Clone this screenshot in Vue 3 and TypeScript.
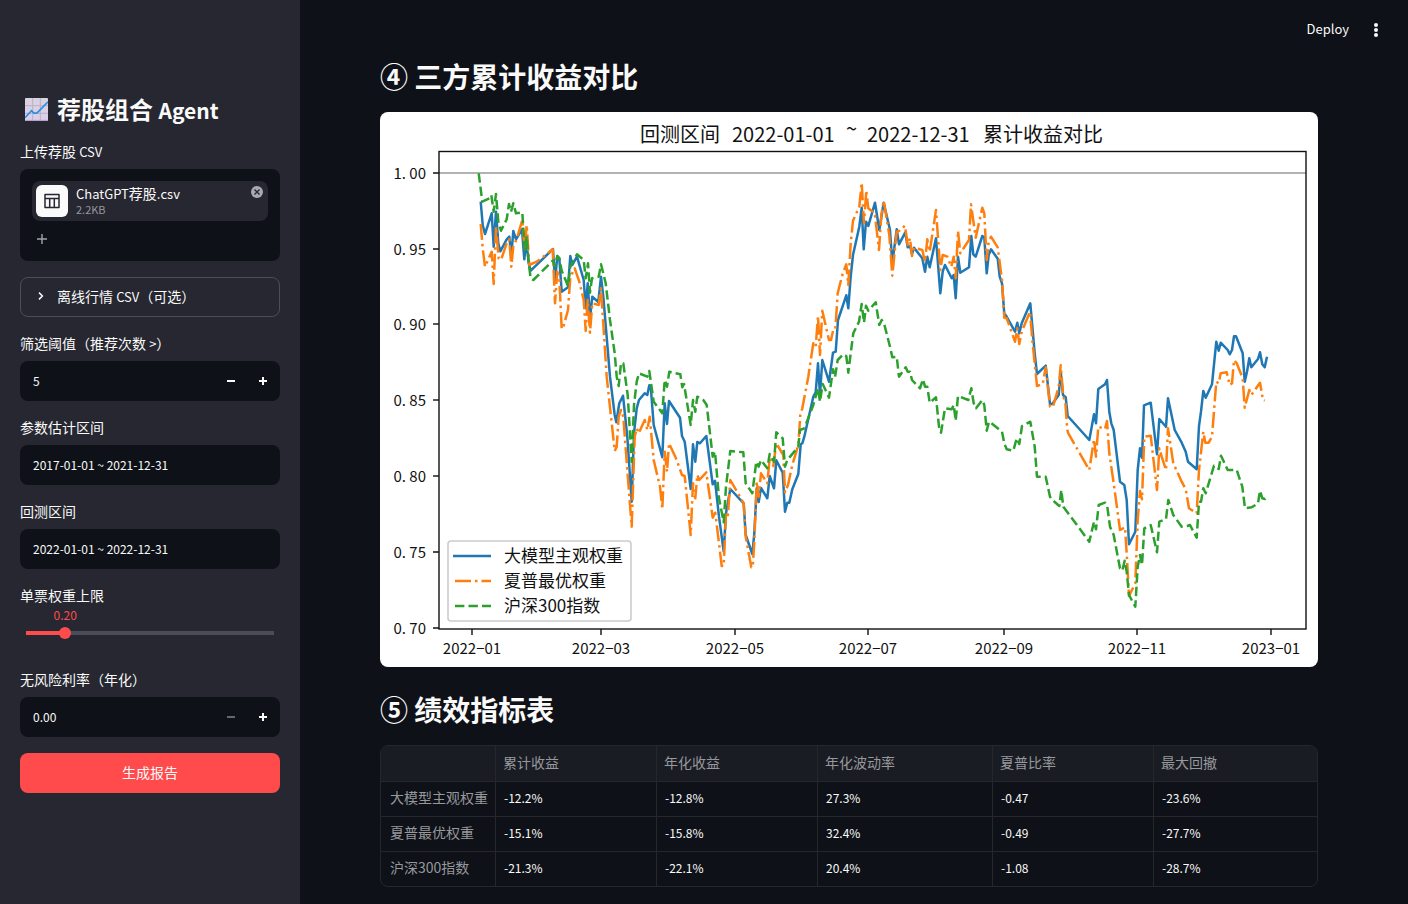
<script setup lang="ts">
import { computed, ref } from 'vue'

const threshold = ref('5')
const estimateRange = ref('2017-01-01 ~ 2021-12-31')
const backtestRange = ref('2022-01-01 ~ 2022-12-31')
const maxWeight = ref(0.2)
const riskFree = ref('0.00')

const minW = 0.05
const maxW = 1
const fill = computed(() => ((maxWeight.value - minW) / (maxW - minW)) * 100)
const sliderStyle = computed(() => ({ '--fill': fill.value + '%' }))
const valueStyle = computed(() => ({ left: fill.value + '%' }))

function bumpThreshold(step: number) {
  threshold.value = String(Math.max(0, Number(threshold.value) + step))
}
function bumpRate(step: number) {
  riskFree.value = Math.max(0, Number(riskFree.value) + step).toFixed(2)
}

const yTicks = [
  { y: 173, label: '1. 00' },
  { y: 249, label: '0. 95' },
  { y: 324, label: '0. 90' },
  { y: 400, label: '0. 85' },
  { y: 476, label: '0. 80' },
  { y: 552, label: '0. 75' },
  { y: 628, label: '0. 70' },
]
const xTicks = [
  { x: 472, label: '2022−01' },
  { x: 601, label: '2022−03' },
  { x: 735, label: '2022−05' },
  { x: 868, label: '2022−07' },
  { x: 1004, label: '2022−09' },
  { x: 1137, label: '2022−11' },
  { x: 1271, label: '2023−01' },
]

const llmLine =
  '480.7,201.7 482.7,225 485,234 491.7,213.3 493.7,246.7 496,211.7 498.3,243.3 500.3,251.3 506.7,239.3 509.3,236.7 511.3,256 513.3,231 516,239.3 522,229.3 524.3,259.3 526.3,240 528.7,263.3 530.7,270.7 553,249 555,281.7 557.3,256 559.3,258.3 561.7,291.7 568,287.3 570.3,256 572.3,265 577,256.7 583.7,280 585.7,308.3 587.7,283.3 590,318.3 592.3,296.7 598.3,302 601,276.7 603.3,296.7 610,376.7 614.7,415 616.3,422.3 619.3,403.3 623,395.7 627.3,436.7 631.7,501.7 634,433.3 636.7,408.3 639,400 644.7,393.3 647.3,395 649.3,385.3 651,390 653.7,425 662.3,457.3 664.7,403.3 667,424 669,401 680,417.7 682,436 684.7,441.7 690.7,489 693,444.3 695.3,461.7 697.3,442 700,443.3 706.3,436 712.7,484.3 715,480.7 719,516.7 723.7,551.7 726,513.3 730.3,489 743.7,503.3 745.7,535 752.3,554 754.3,533.3 756.7,488.3 758.7,502 761,488 767.3,498.3 769.7,476 774,488.3 776.3,460.3 782.7,472.7 785,511.7 787.3,502.7 789.3,502.7 792.3,489.3 798.3,474 800.7,444.3 802.3,443.3 804.3,436.7 813.3,396.7 815.7,392.3 818,363.3 820,395 822.3,360 829,381.7 833,352.7 835.7,351.7 838,320 846.3,295.3 848.3,308.3 850.7,276.7 853,255 859.3,226.7 861.7,207.7 863.7,249.3 866,221.7 868.3,226 875,202.7 879.3,230 883.7,202.7 890,230 892.3,263.3 896.7,229.3 899,244.3 905.3,232.3 907.7,247.3 910,246 912,254 914,247.7 922.3,258.3 925,271.7 927.3,256.7 929.7,267.3 936,238.3 940.3,293.3 942.7,271.7 945,265 951.7,278.3 953.7,275 955.7,298.3 958,256.7 960.3,272.7 969,267.3 971.3,236 973.3,254.3 975.7,256.7 982.3,236 984.3,237.3 986.7,273.3 988.7,255 991,249.3 997.7,258.7 999.7,276.7 1002,283.3 1004.3,314 1006.3,316 1015,331.7 1017.3,322.7 1019.3,333.3 1021.7,323.3 1030.3,303.3 1034.7,353.3 1037,374 1045.7,365.7 1050,404 1052.3,404 1058.7,395 1060.7,371.7 1063,395 1065.7,397.3 1067.7,416 1089.3,440 1094,414.3 1096,423.3 1098.3,389 1105,384.3 1107,380 1109.3,411.7 1111.3,423.3 1113.7,430 1120,481.7 1124.3,485 1126.7,500 1129,544.3 1135.3,531.7 1137.7,470 1140,448.3 1142,457.7 1144,405.3 1150.7,402.7 1157,454.3 1159.3,419 1166,426.7 1168,398.3 1174.7,430 1181.7,442.7 1185.7,451.7 1188,461.7 1196.7,469.3 1199,426 1201,411.7 1203.3,391 1205.7,397.7 1212,384.3 1216.3,341.7 1218.7,350.7 1220.7,342.7 1227.7,350 1229.7,354.3 1232,350 1234,336.3 1236,336.3 1242.7,353.3 1244.7,381.7 1247,371.7 1249.3,358.3 1251.3,367.3 1258,359 1260,352.3 1262.3,364.3 1264.7,367.3 1267,356.7'

const sharpeLine =
  '480.7,224 482.7,248.3 485,266.7 491.7,251.7 493.7,284 496,226.7 498.7,258.3 501,260 506.7,243.3 509.3,239.3 511.3,266.7 513.3,246.7 517.3,237.3 522.3,220 524.7,249 526.7,225 529.3,265 536.7,261.7 552.7,249.3 555,303.3 557.3,271.7 559.3,278.3 561.7,329 563.7,325.7 568,310 570.3,277.3 574.7,268.3 579.3,281.7 583.7,300 585.7,331 587.7,300 590,332.7 592.3,303.3 598.7,305 601,288.3 606.7,376.7 614.7,451 616.7,446.7 618.7,416.7 621,410 623.3,416.7 627.3,470 631.7,526.7 634.7,436.7 636.7,428.3 638.7,433.3 644.7,420 647.3,430 649.7,416.7 653.7,460 660,486.7 662.3,509.3 664.7,451.7 667,471.7 669,443.3 676,458.3 682,475 684.7,476 690.7,535 693,483.3 695.3,498.3 697.3,475 699.3,480 706.3,472.3 712.7,517.7 715.3,512.7 721.7,566 723.7,566 726,511.7 728,515 730.3,480 743.7,503.3 745.7,536.7 751.3,567.3 752.7,567.3 754.3,541.7 756.7,481.7 758.7,496.7 761,473.3 767.3,483.3 769.7,458.3 773.3,466 776.3,443.3 783.3,455 785,492.3 788,485 792.3,465 798.3,445 800.3,415 802.3,408.3 808.3,376.7 813.3,343.3 815.7,346.7 818,316 820,355 822.3,310.7 829,340 831,340 833,331 835.3,330 837.7,293.3 842.3,275 846.3,264.3 848.3,285 850.7,243.3 853,220.7 859.3,206.7 861.7,182.7 864,223.3 866.3,190.7 868.3,208.3 874.7,213.3 879,250 881.3,215 883.7,200.7 889.3,235 892.3,275.7 896.7,231.7 899,231 905,225.7 907.7,245 910,238.3 912,256 914.3,247.7 922.3,250 925,261.7 927.3,239.3 929.7,251.7 936,210 940.3,270 942.7,255 947.3,256.7 951.3,266.7 953.7,256.7 955.7,278.3 958,231 960.3,253.3 969,240 971,204.3 975.7,237.7 982.3,207.7 984.3,213.3 986.7,260 988.7,241.7 991,236.7 997.7,247.3 1002,280 1004.3,317.7 1006.7,318.3 1015,341.7 1017.3,328.3 1019.3,344 1021.7,331.7 1030,311.7 1032.3,340 1037,386 1042.7,384 1045.7,367.3 1050,406.7 1053,406.7 1058.7,386.7 1060.7,365.3 1063.3,396.7 1065.3,401.7 1067.3,430 1068.3,433.3 1089.3,470 1094,439.3 1096,456.7 1098.3,426.7 1105,429 1107,421 1109.3,453.3 1113.7,483.3 1120,530 1125,527.3 1126.7,553.3 1129,596 1135.3,583.3 1137.7,520 1140,491 1142,499.3 1144.3,436.7 1150.7,435.7 1157,490 1159.3,448.3 1161.7,456.7 1166,470 1168,428.3 1173.3,463.3 1181.7,481.7 1185.7,489.3 1189,508.3 1196.7,513.3 1199,470 1203.3,431.7 1205.3,442.7 1208.7,442.7 1212,436.7 1216.3,381.7 1218.7,383.3 1220.7,373.3 1226.7,372.3 1229.7,385 1232,383.3 1234,360 1236.7,363.3 1242.7,378.3 1244.7,407.7 1249.3,390 1251.3,395 1260,382.7 1263,400 1264.7,400.7'

const indexLine =
  '478.7,173.3 482.3,201.7 489.3,198.3 491.3,195 493.7,211.7 496,194 498.3,221.7 501,230.7 506.7,219.3 509,204 511,211.7 513.3,203.3 516,213.3 522.3,212.3 524.7,250 526.7,236 528.7,263.3 530.7,278.3 533.3,280 552.7,260.7 555,266 557.3,256 559.3,258.3 561.7,270.7 568,286 570.3,266.7 577,254.3 583.7,260 585.7,278.3 588,263.3 590,292.7 592,278.3 598.7,276.7 601,264.3 605.7,283.3 610,320 614.7,353.3 616.7,376.7 618.7,386 621,363.3 623.3,363.3 627.7,395 631.7,461.7 634,405 636.7,381.7 639,373.3 647.3,376.7 649.3,371 653.7,401.7 662.3,413.3 664.7,380 667,386.7 669.3,371.7 680.3,374.3 682.3,387.3 684,384 690.7,425 693,400 695.3,411.7 697.3,396.7 703.3,400 706.7,405 712.7,456.7 715,451.7 719,498.3 723.7,522.3 726,486.7 730.3,451 743.3,452.3 745.7,483.3 752.3,493.3 756.3,461.7 758.7,466.7 761,460 767.3,468.3 769.7,454 774,461.7 776.3,432.3 782.7,438.3 785,466.7 787.3,460 798.3,446.7 800,430 804.3,428.3 813.3,405 818,388.3 820,401.7 822.7,384 829,397.7 833,369.3 835,377.3 837.7,360 843.3,354.3 846.3,356 848.3,372.7 850.7,353.3 853.3,333.3 859,321.7 861.7,304 864,322.7 866,305.7 868.3,310.7 875.7,302.3 879.3,325 881.7,320 884,323.3 890,346.7 892.3,357.3 896.7,356.7 899,376.7 905.7,367.3 907.7,371.7 910,371.7 912,380 920,388.3 923,379.3 925,386.7 927.3,386.7 929.7,402.7 936,397.3 939,426.7 941,432.7 945,408.3 951.7,409.3 953.7,405 955.7,420.7 958,396 968.3,400 971.3,388.3 973.7,403.3 976,408.3 982.3,400 984.3,405 986.7,430.7 989,421.7 990.7,422.7 997.7,428.3 1002,431.7 1004.3,443.3 1006.7,449.3 1013.3,450.7 1016.7,438.3 1019.3,444 1022,426 1030.3,421.7 1034.7,446.7 1037,476.7 1045.7,476.7 1050,496.7 1052.3,500 1059.3,506 1061.3,490 1063.3,506.7 1089.3,541.7 1094,521.7 1096,529.3 1098.7,505 1105,502.7 1107.3,506.7 1110,526.7 1113.7,535 1120,568.3 1122.3,570.7 1124.7,560.7 1126.7,571.7 1129,595 1135.3,606.7 1137.7,566.7 1140,555 1142,565 1144.3,528.3 1150.7,525 1157,552.3 1159.3,521.7 1166,519 1168.3,500 1173.3,515 1181.7,526.7 1187.3,526 1190,525 1196.7,537.7 1199,501.7 1201,501.7 1203.3,488.3 1205.7,493.3 1214,465.7 1218.7,469 1221,455.7 1227.7,470 1236.7,470 1242.3,486.7 1245,508.3 1251.7,507.3 1258,503.3 1260,490.7 1262.3,498.3 1265,499 1267,495'

const columns = ['累计收益', '年化收益', '年化波动率', '夏普比率', '最大回撤']
const rows = [
  { name: '大模型主观权重', values: ['-12.2%', '-12.8%', '27.3%', '-0.47', '-23.6%'] },
  { name: '夏普最优权重', values: ['-15.1%', '-15.8%', '32.4%', '-0.49', '-27.7%'] },
  { name: '沪深300指数', values: ['-21.3%', '-22.1%', '20.4%', '-1.08', '-28.7%'] },
]
</script>

<template>
  <div class="app">
    <aside class="sidebar">
      <h1 class="brand">
        <svg class="brand-icon" viewBox="0 0 24 24" aria-hidden="true">
          <defs>
            <linearGradient id="paper" x1="0" y1="0" x2="0" y2="1">
              <stop offset="0" stop-color="#d9d2df" />
              <stop offset="1" stop-color="#dccfea" />
            </linearGradient>
          </defs>
          <rect width="24" height="24" rx="1" fill="url(#paper)" />
          <path d="M8 0V24M16 0V24M0 8H24M0 16H24" stroke="#b9afc2" stroke-width="1" />
          <path d="M0 23.4H24" stroke="#b79fd0" stroke-width="1.2" />
          <path d="M0 20.5L6.8 13.2L9.2 15.8H12.4L24 4" fill="none" stroke="#2b8fe0" stroke-width="1.7" />
        </svg>
        <span>荐股组合 <span class="brand-latin">Agent</span></span>
      </h1>

      <div class="field">
        <label class="label" for="upload">上传荐股 <span class="latin">CSV</span></label>
        <div class="uploader">
          <div class="file">
            <span class="file-icon">
              <svg viewBox="0 0 18 18" aria-hidden="true">
                <path
                  d="M2 2.5H16V15.5H2ZM2 6.5H16M6.7 6.5V15.5M11.3 6.5V15.5"
                  fill="none"
                  stroke="#262730"
                  stroke-width="1.5"
                  stroke-linejoin="round"
                />
              </svg>
            </span>
            <span class="file-text">
              <span class="file-name"><span class="latin">ChatGPT</span>荐股<span class="latin">.csv</span></span>
              <span class="file-size">2.2KB</span>
            </span>
            <button class="remove" type="button" aria-label="移除文件">
              <svg viewBox="0 0 12 12" aria-hidden="true">
                <circle cx="6" cy="6" r="6" fill="#a9aaae" />
                <path d="M3.5 3.5L8.5 8.5M8.5 3.5L3.5 8.5" stroke="#262730" stroke-width="1.4" />
              </svg>
            </button>
          </div>
          <button id="upload" class="add" type="button" aria-label="添加文件">
            <svg viewBox="0 0 10 10" aria-hidden="true">
              <path d="M5 0V10M0 5H10" stroke="#a3a4a8" stroke-width="1.4" />
            </svg>
          </button>
        </div>
      </div>

      <button class="expander" type="button" aria-expanded="false">
        <svg viewBox="0 0 6 8" aria-hidden="true">
          <path d="M1 0.6L4.4 4L1 7.4" fill="none" stroke="#fafafa" stroke-width="1.5" />
        </svg>
        <span>离线行情 <span class="latin">CSV</span>（可选）</span>
      </button>

      <div class="field">
        <label class="label" for="threshold">筛选阈值（推荐次数 <span class="latin">&gt;</span>）</label>
        <div class="control">
          <input id="threshold" v-model="threshold" class="text" type="text" />
          <button class="step" type="button" aria-label="减少" @click="bumpThreshold(-1)">
            <svg viewBox="0 0 8 8"><path d="M0 4H8" stroke="currentColor" stroke-width="2" /></svg>
          </button>
          <button class="step" type="button" aria-label="增加" @click="bumpThreshold(1)">
            <svg viewBox="0 0 8 8"><path d="M0 4H8M4 0V8" stroke="currentColor" stroke-width="2" /></svg>
          </button>
        </div>
      </div>

      <div class="field">
        <label class="label" for="estimate">参数估计区间</label>
        <div class="control"><input id="estimate" v-model="estimateRange" class="text" type="text" /></div>
      </div>

      <div class="field">
        <label class="label" for="backtest">回测区间</label>
        <div class="control"><input id="backtest" v-model="backtestRange" class="text" type="text" /></div>
      </div>

      <div class="field slider-field">
        <label class="label" for="weight">单票权重上限</label>
        <div class="value-rail">
          <output class="value" :style="valueStyle" for="weight">{{ maxWeight.toFixed(2) }}</output>
        </div>
        <input
          id="weight"
          v-model.number="maxWeight"
          class="slider"
          type="range"
          :min="minW"
          :max="maxW"
          step="0.01"
          :style="sliderStyle"
        />
      </div>

      <div class="field">
        <label class="label" for="rate">无风险利率（年化）</label>
        <div class="control">
          <input id="rate" v-model="riskFree" class="text" type="text" />
          <button class="step" type="button" aria-label="减少" :disabled="Number(riskFree) <= 0" @click="bumpRate(-0.01)">
            <svg viewBox="0 0 8 8"><path d="M0 4H8" stroke="currentColor" stroke-width="2" /></svg>
          </button>
          <button class="step" type="button" aria-label="增加" @click="bumpRate(0.01)">
            <svg viewBox="0 0 8 8"><path d="M0 4H8M4 0V8" stroke="currentColor" stroke-width="2" /></svg>
          </button>
        </div>
      </div>

      <button class="primary" type="button">生成报告</button>
    </aside>

    <div class="page">
      <header class="toolbar">
        <button class="deploy" type="button">Deploy</button>
        <button class="menu" type="button" aria-label="菜单">
          <svg viewBox="0 0 4 14" aria-hidden="true">
            <circle cx="2" cy="2" r="2" />
            <circle cx="2" cy="7" r="2" />
            <circle cx="2" cy="12" r="2" />
          </svg>
        </button>
      </header>

      <main class="content">
        <h2 class="heading">④ 三方累计收益对比</h2>

        <svg class="chart" viewBox="380 112 938 555" role="img" aria-label="累计收益对比">
          <rect x="380" y="112" width="938" height="555" fill="#fff" />
          <text class="chart-title" y="142">
            <tspan x="640">回测区间</tspan>
            <tspan x="732">2022-01-01</tspan>
            <tspan x="846" dy="-6">~</tspan>
            <tspan x="867" dy="6">2022-12-31</tspan>
            <tspan x="983">累计收益对比</tspan>
          </text>
          <path d="M439 173H1306" stroke="#999" stroke-width="1.6" />
          <g fill="none" stroke-width="2.5" stroke-linejoin="round">
            <polyline :points="llmLine" stroke="#1f77b4" />
            <polyline :points="sharpeLine" stroke="#ff7f0e" stroke-dasharray="16 4 2.5 4" />
            <polyline :points="indexLine" stroke="#2ca02c" stroke-dasharray="9.4 4.1" />
          </g>
          <rect x="439" y="151.5" width="867" height="477.5" fill="none" stroke="#111" stroke-width="1.4" />
          <g v-for="t in yTicks" :key="t.label">
            <path :d="`M433 ${t.y}H439`" stroke="#111" stroke-width="1.4" />
            <text class="tick" x="426" :y="t.y + 6" text-anchor="end">{{ t.label }}</text>
          </g>
          <g v-for="t in xTicks" :key="t.label">
            <path :d="`M${t.x} 629V635`" stroke="#111" stroke-width="1.4" />
            <text class="tick" :x="t.x" y="654" text-anchor="middle">{{ t.label }}</text>
          </g>
          <rect x="448" y="541" width="183" height="80" rx="3" fill="#fff" fill-opacity="0.8" stroke="#ccc" stroke-width="1.6" />
          <g fill="none" stroke-width="2.5">
            <path d="M453 556H491" stroke="#1f77b4" />
            <path d="M455 581H491" stroke="#ff7f0e" stroke-dasharray="16 4 2.5 4" />
            <path d="M455 606H491" stroke="#2ca02c" stroke-dasharray="9.4 4.1" />
          </g>
          <text class="legend" x="504" y="562">大模型主观权重</text>
          <text class="legend" x="504" y="587">夏普最优权重</text>
          <text class="legend" x="504" y="612">沪深300指数</text>
        </svg>

        <h2 class="heading">⑤ 绩效指标表</h2>

        <div class="table-wrap">
          <table>
            <colgroup>
              <col class="c-name" />
              <col class="c-mid" />
              <col class="c-mid" />
              <col class="c-wide" />
              <col class="c-mid" />
              <col />
            </colgroup>
            <thead>
              <tr>
                <td></td>
                <th v-for="c in columns" :key="c" scope="col">{{ c }}</th>
              </tr>
            </thead>
            <tbody>
              <tr v-for="r in rows" :key="r.name">
                <th scope="row">{{ r.name }}</th>
                <td v-for="(v, i) in r.values" :key="i">{{ v }}</td>
              </tr>
            </tbody>
          </table>
        </div>
      </main>
    </div>
  </div>
</template>

<style>
body {
  margin: 0;
  background: #0e1117;
}
</style>

<style scoped>
.app,
.app * {
  box-sizing: border-box;
}
.app {
  display: flex;
  min-height: 100vh;
  background: #0e1117;
  color: #fafafa;
  font-family: 'Noto Sans CJK SC', 'Noto Sans', sans-serif;
  font-size: 14px;
  line-height: 20px;
}
button,
input {
  font: inherit;
  color: inherit;
  border: 0;
  padding: 0;
  margin: 0;
  background: none;
}
svg {
  display: block;
}
.latin {
  font-size: 13px;
  line-height: 1;
}
.sidebar {
  flex: 0 0 300px;
  display: flex;
  flex-direction: column;
  gap: 16px;
  padding: 93px 20px 20px;
  background: #262730;
}
.brand {
  display: flex;
  align-items: center;
  gap: 9px;
  height: 32px;
  margin: 0;
  padding-left: 5px;
  font-size: 24px;
  font-weight: 700;
  line-height: 32px;
}
.brand-icon {
  width: 23px;
  height: 23px;
}
.brand-latin {
  font-size: 21px;
  line-height: 1;
}
.field {
  display: flex;
  flex-direction: column;
  gap: 8px;
}
.uploader {
  display: flex;
  flex-direction: column;
  align-items: flex-start;
  gap: 8px;
  padding: 12px 12px 12px;
  border-radius: 8px;
  background: #0e1117;
}
.file {
  display: flex;
  align-items: flex-start;
  gap: 8px;
  width: 100%;
  height: 40px;
  padding: 4px;
  border-radius: 8px;
  background: #262730;
}
.file-icon {
  display: grid;
  place-items: center;
  width: 32px;
  height: 32px;
  border-radius: 6px;
  background: #fafafa;
}
.file-icon svg {
  width: 18px;
  height: 18px;
}
.file-text {
  display: flex;
  flex: 1;
  flex-direction: column;
}
.file-name {
  line-height: 16px;
}
.file-size {
  font-size: 11px;
  line-height: 16px;
  color: #97989d;
}
.remove {
  width: 12px;
  height: 12px;
  margin-top: 1px;
  margin-right: 1px;
}
.add {
  padding: 5px 5px 5px;
}
.add svg {
  width: 10px;
  height: 10px;
}
.expander {
  display: flex;
  align-items: center;
  gap: 13px;
  height: 40px;
  padding: 0 0 2px 17px;
  border: 1px solid #4c4d56;
  border-radius: 8px;
  text-align: left;
}
.expander svg {
  width: 6px;
  height: 8px;
}
.control {
  display: flex;
  height: 40px;
  padding: 0 1px;
  border-radius: 8px;
  background: #0e1117;
}
.uploader {
  min-height: 92px;
}
.text {
  flex: 1;
  min-width: 0;
  padding: 0 12px;
  font-size: 12px;
  outline: none;
}
.step {
  display: grid;
  place-items: center;
  width: 32px;
}
.step svg {
  width: 8px;
  height: 8px;
}
.step:disabled {
  color: #66686c;
}
.slider-field {
  gap: 0;
  padding-bottom: 12px;
}
.value-rail {
  position: relative;
  height: 20px;
  margin: 0 6px;
}
.value {
  position: absolute;
  top: 0;
  transform: translateX(-50%);
  font-size: 12px;
  color: #ff4b4b;
}
.slider {
  appearance: none;
  height: 16px;
  width: 100%;
  background: linear-gradient(to right, #ff4b4b var(--fill), #4b4c57 var(--fill)) center / calc(100% - 12px) 4px
    no-repeat;
}
.slider::-webkit-slider-thumb {
  appearance: none;
  width: 12px;
  height: 12px;
  border-radius: 50%;
  background: #ff4b4b;
}
.primary {
  height: 40px;
  padding-bottom: 2px;
  border-radius: 8px;
  background: #ff4b4b;
}
.page {
  flex: 1;
  min-width: 0;
}
.toolbar {
  display: flex;
  align-items: center;
  justify-content: flex-end;
  gap: 25px;
  height: 60px;
  padding-right: 30px;
}
.deploy {
  padding-bottom: 2px;
  font-size: 13px;
}
.menu svg {
  width: 4px;
  height: 14px;
  fill: #fafafa;
}
.content {
  padding: 0 90px 16px 80px;
}
.heading {
  margin: 0;
  padding-bottom: 2px;
  font-size: 28px;
  font-weight: 700;
  line-height: 32px;
}
.chart {
  width: 100%;
  height: auto;
  margin: 18px 0 26px;
  border-radius: 8px;
}
.chart text {
  fill: #111;
}
.chart-title {
  font-size: 20px;
}
.tick {
  font-size: 15px;
}
.legend {
  font-size: 17px;
}
.table-wrap {
  margin-top: 18px;
  overflow: hidden;
  border: 1px solid #25272d;
  border-radius: 8px;
}
table {
  width: 100%;
  table-layout: fixed;
  border-collapse: separate;
  border-spacing: 0;
}
.c-name {
  width: 115px;
}
.c-mid {
  width: 161px;
}
.c-wide {
  width: 175px;
}
th,
td {
  height: 35px;
  padding: 0 8px 2px;
  border-right: 1px solid #25272d;
  border-bottom: 1px solid #25272d;
  text-align: left;
  font-weight: 400;
  white-space: nowrap;
}
th {
  padding-bottom: 4px;
  color: #97989c;
}
tbody th {
  padding-left: 9px;
  padding-right: 0;
}
thead th {
  padding-left: 7px;
}
td {
  font-size: 12px;
}
thead th,
thead td {
  height: 36px;
  background: #1a1c23;
}
th:last-child,
td:last-child {
  border-right: 0;
}
tbody tr:last-child th,
tbody tr:last-child td {
  height: 34px;
  border-bottom: 0;
}
</style>
